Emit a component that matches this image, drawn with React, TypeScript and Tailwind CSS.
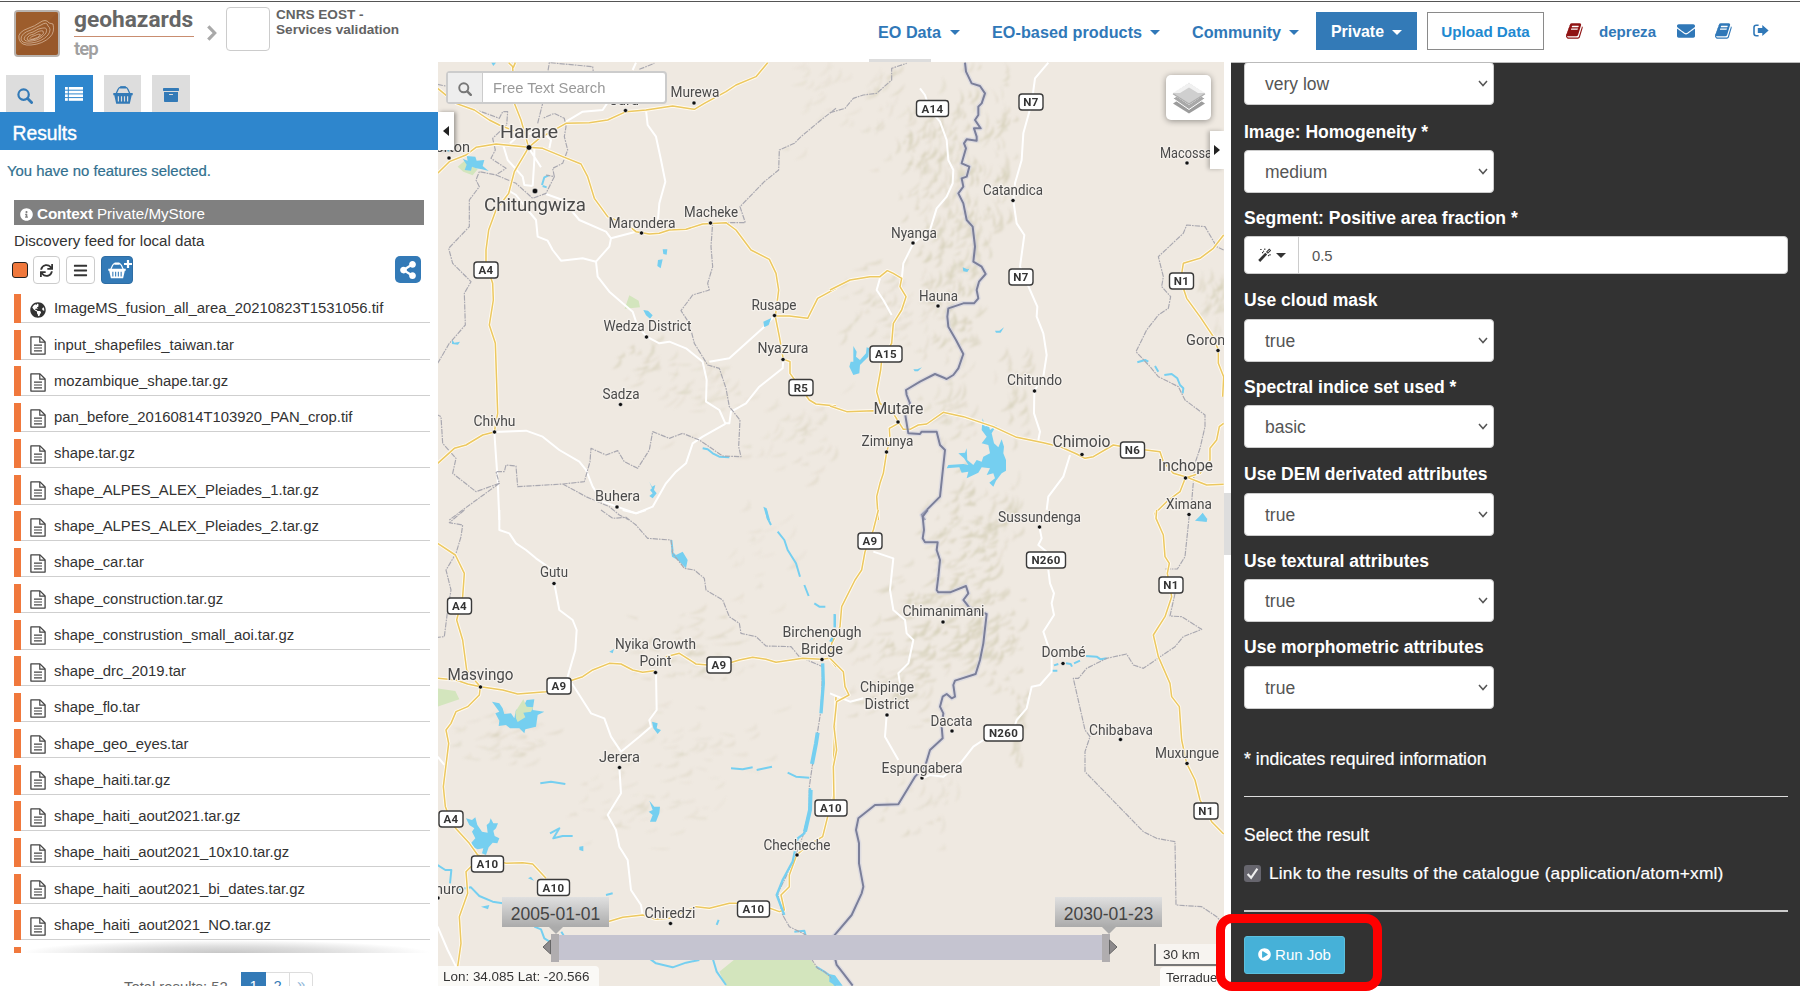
import React from "react";
import {
  FaArchive,
  FaBars,
  FaEnvelope,
  FaGlobeAmericas,
  FaInfoCircle,
  FaPlayCircle,
  FaShareAlt,
  FaSync,
} from "react-icons/fa";

const files = [
  "ImageMS_fusion_all_area_20210823T1531056.tif",
  "input_shapefiles_taiwan.tar",
  "mozambique_shape.tar.gz",
  "pan_before_20160814T103920_PAN_crop.tif",
  "shape.tar.gz",
  "shape_ALPES_ALEX_Pleiades_1.tar.gz",
  "shape_ALPES_ALEX_Pleiades_2.tar.gz",
  "shape_car.tar",
  "shape_construction.tar.gz",
  "shape_construstion_small_aoi.tar.gz",
  "shape_drc_2019.tar",
  "shape_flo.tar",
  "shape_geo_eyes.tar",
  "shape_haiti.tar.gz",
  "shape_haiti_aout2021.tar.gz",
  "shape_haiti_aout2021_10x10.tar.gz",
  "shape_haiti_aout2021_bi_dates.tar.gz",
  "shape_haiti_aout2021_NO.tar.gz",
];

/* ---------- small icons ---------- */

const SearchGlyph = ({ className }: { className: string }) => (
  <svg viewBox="0 0 16 16" className={className} fill="none" stroke="currentColor">
    <circle cx="6.6" cy="6.6" r="5.2" strokeWidth="2.2" />
    <path d="M10.6 10.6 L14.6 14.6" strokeWidth="2.8" strokeLinecap="round" />
  </svg>
);

const ListGlyph = () => (
  <svg viewBox="0 0 18 14" className="h-[14px] w-[18px]" fill="currentColor">
    {[0, 3.7, 7.4, 11.1].map((y) => (
      <React.Fragment key={y}>
        <rect x="0" y={y} width="2.8" height="2.7" />
        <rect x="3.8" y={y} width="14.2" height="2.7" />
      </React.Fragment>
    ))}
  </svg>
);

const BookGlyph = ({ className }: { className: string }) => (
  <svg viewBox="0 0 1792 1792" className={className} fill="currentColor">
    <path d="M1639 478q40 57 18 129l-275 906q-19 64-76.5 107.5t-122.5 43.5h-923q-77 0-148.5-53.5t-99.5-131.5q-24-67-2-127 0-4 3-27t4-37q1-8-3-21.5t-3-19.5q2-11 8-21t16.5-23.5 16.5-23.5q23-38 45-91.5t30-91.5q3-10 .5-30t-.5-28q3-11 17-28t17-23q21-36 42-92t25-90q1-9-2.5-32t.5-28q4-13 22-30.5t22-22.5q19-26 42.5-84.5t27.5-96.5q1-8-3-25.5t-2-26.5q2-8 9-18t18-23 17-21q8-12 16.5-30.5t15-35 16-36 19.5-32 26.5-23.5 36-11.5 47.5 5.5l-1 3q38-9 51-9h761q74 0 114 56t18 130l-274 906q-36 119-71.5 153.5t-128.5 34.5h-869q-27 0-38 15-11 16-1 43 24 70 144 70h923q29 0 56-15.5t35-41.5l300-987q7-22 5-57 38 15 59 43zm-1064 2q-4 13 2 22.5t20 9.5h608q13 0 25.5-9.5t16.5-22.5l21-64q4-13-2-22.5t-20-9.5h-608q-13 0-25.5 9.5t-16.5 22.5zm-83 256q-4 13 2 22.5t20 9.5h608q13 0 25.5-9.5t16.5-22.5l21-64q4-13-2-22.5t-20-9.5h-608q-13 0-25.5 9.5t-16.5 22.5z" />
  </svg>
);

const SignOutGlyph = () => (
  <svg viewBox="0 0 16 14" className="h-[14px] w-[16px]" fill="currentColor">
    <path d="M5.6 1.2 H3.2 Q1 1.2 1 3.4 V9.6 Q1 11.8 3.2 11.8 H5.6" fill="none" stroke="currentColor" strokeWidth="1.6" />
    <path d="M9.3 1 L15.6 6.5 L9.3 12 V9 H4.8 V4 H9.3 Z" />
  </svg>
);

const FileGlyph = () => (
  <svg viewBox="0 0 16 19" className="h-[19px] w-[16px]" fill="none" stroke="#444">
    <path d="M0.9 0.9 H10 L15.1 6 V18.1 H0.9 Z" strokeWidth="1.3" strokeLinejoin="round" />
    <path d="M9.8 1 V6.2 H15" strokeWidth="1.2" />
    <path d="M4 9.2 H12 M4 12 H12 M4 14.8 H12" strokeWidth="1.2" />
  </svg>
);

const WandGlyph = () => (
  <svg viewBox="0 0 14 14" className="h-[14px] w-[14px]" fill="none" stroke="currentColor">
    <path d="M1.2 13 L8.2 5.6" strokeWidth="2.7" />
    <path d="M8.9 4.9 L12.2 1.500" strokeWidth="2.7" />
    <path d="M9.6 4.2 L11.6 2.100" stroke="#fff" strokeWidth=".9" />
    <path d="M2.2 1.500 H3.6 M5.2 2.800 L6 3.600 M6.8 .6 V2 M4 4.600 H5.200 M12 6 V7.400 M10.200 7.200 L11 8" strokeWidth="1.100" />
  </svg>
);

const Caret = () => (
  <span className="inline-block border-x-[5px] border-t-[5px] border-x-transparent border-t-current" />
);

/* ---------- header ---------- */

const Logo = () => (
  <svg viewBox="0 0 48 49" className="h-[49px] w-[48px]">
    <rect x="1" y="1" width="46" height="47" rx="4" fill="#b9b3ae" />
    <rect x="3" y="3" width="42" height="43" rx="2" fill="#98582a" />
    <path d="M3 3 H45 L3 44 Z" fill="#a4642f" opacity=".45" />
    <g fill="none" stroke="#f0dcc8" strokeWidth=".7" opacity=".8">
      <path d="M6 30 Q4 23 16 19 Q22 17 26 14 Q33 9 36 14 L40 15 Q42 23 37 28 Q30 35 18 36 Q8 37 6 30Z" />
      <path d="M8 30 Q8 24 18 21 Q24 18 28 16 Q34 12 35 17 Q39 20 35 26 Q29 33 18 34 Q9 35 8 30Z" />
      <path d="M11 30 Q12 25 20 23 Q26 19 30 19 Q35 18 33 24 Q28 31 19 32 Q12 33 11 30Z" />
      <path d="M14 30 Q15 26 21 25 Q27 21 30 22 Q32 24 28 27 Q23 31 18 31 Q14 32 14 30Z" />
      <path d="M17 29.5 Q18 27 22 26.5 Q27 24 27.500 26 Q25 29 20 30 Q17 31 17 29.500Z" />
    </g>
  </svg>
);

const Header = () => (
  <header className="flex h-[62px] w-[1800px] border-t border-white bg-white">
    <div className="flex w-full border-t-[1.500px] border-[#555]">
      <div className="flex w-[868px] pl-[13px]">
        <div className="pt-[7px]">
          <Logo />
        </div>
        <div className="ml-[13px] w-[120px] pt-[3px] font-['Roboto'] leading-none">
          <div className="h-[32px] border-b-[1.500px] border-[#c98d70] pt-px text-[22.700px] leading-[27px] font-bold text-[#666]">
            geohazards
          </div>
          <div className="mt-[2px] text-[18.500px] leading-[20px] font-semibold tracking-[-0.900px] text-[#a0a0a0]">tep</div>
        </div>
        <svg viewBox="0 0 10 16" className="mt-[23px] ml-[13px] h-[16px] w-[10px]" fill="none" stroke="#a9a9a9" strokeWidth="3.2">
          <path d="M1.300 1.300 L7.700 8 L1.300 14.700" />
        </svg>
        <div className="mt-[5px] ml-[9px] h-[44px] w-[44px] rounded-[4px] border border-[#ccc]" />
        <div className="ml-[6px] pt-[5px] text-[13.600px] leading-[15.200px] font-bold text-[#636363]">
          CNRS EOST -<br />
          Services validation
        </div>
      </div>
      <nav className="flex flex-1 items-start pt-[10px] text-[16.200px] font-bold text-[#3078b8]">
        <div className="flex h-[50px] w-[114px] flex-col justify-between">
          <a className="flex h-[38px] items-center gap-[9px] pt-[3px] pl-[10px] leading-none whitespace-nowrap">
            EO Data <Caret />
          </a>
          <span className="ml-px h-[3px] w-[62px] bg-[#ddd]" />
        </div>
        <a className="flex h-[38px] w-[200px] items-center gap-[8px] pt-[3px] pl-[10px] leading-none whitespace-nowrap">
          <span className="tracking-[0.050px]">EO-based products</span> <Caret />
        </a>
        <a className="flex h-[38px] w-[134px] items-center gap-[8px] pt-[3px] pl-[10px] leading-none whitespace-nowrap">
          Community <Caret />
        </a>
        <a className="flex h-[38px] w-[101px] items-center gap-[8px] bg-[#337ab7] pt-[2px] pl-[15px] text-[15.900px] leading-none text-white">
          Private <Caret />
        </a>
        <a className="ml-[10px] flex h-[38px] w-[117px] items-center justify-center border-[1.500px] border-[#8a8a8a] pt-px text-[15.200px] leading-none whitespace-nowrap text-[#2189d1]">
          Upload Data
        </a>
        <div className="flex h-[38px] items-center text-[15.100px]">
          <BookGlyph className="ml-[22px] h-[18px] w-[18px] text-[#8f1313]" />
          <span className="ml-[15px] w-[58px] pt-[2px]">depreza</span>
          <FaEnvelope className="ml-[20px] h-[18px] w-[18px]" />
          <BookGlyph className="ml-[20px] h-[18px] w-[18px]" />
          <span className="ml-[20px]">
            <SignOutGlyph />
          </span>
        </div>
      </nav>
    </div>
  </header>
);

/* ---------- results panel ---------- */

const Basket = ({ className }: { className: string }) => (
  <svg viewBox="0 0 20 18" className={className} fill="none" stroke="currentColor">
    <path d="M3 8 L5 3.500 Q6 1.200 8 1.200 H12 Q14 1.200 15 3.500 L17 8" strokeWidth="1.300" />
    <path d="M8 1.400 H12" strokeWidth="2.400" strokeLinecap="round" />
    <path d="M0.300 7 H19.700 V9.200 H18.700 L16.800 17.700 H3.200 L1.300 9.200 H0.300 Z" fill="currentColor" stroke="none" />
    <path d="M5.400 10.300 V15.600 M8.500 10.300 V15.600 M11.500 10.300 V15.600 M14.600 10.300 V15.600" stroke="var(--slot)" strokeWidth="1.200" />
  </svg>
);

const ResultsPanel = () => (
  <aside className="flex w-[438px] flex-col overflow-hidden bg-white">
    <div className="flex h-[50px] shrink-0 items-end gap-[11px] pl-[6px] text-[#337ab7]">
      <div className="flex h-[37px] w-[38px] items-center justify-center bg-[#ddd] pt-[4px]">
        <SearchGlyph className="h-[16px] w-[16px]" />
      </div>
      <div className="flex h-[37px] w-[38px] items-center justify-center bg-[#2e86cd] text-white">
        <ListGlyph />
      </div>
      <div className="flex h-[37px] w-[37px] items-center justify-center bg-[#ddd] pt-[3px] [--slot:#ddd]">
        <Basket className="h-[18px] w-[20px]" />
      </div>
      <div className="flex h-[37px] w-[38px] items-center justify-center bg-[#ddd] pt-[3px]">
        <FaArchive className="h-[16px] w-[16px]" />
      </div>
    </div>
    <div className="h-[38px] shrink-0 bg-[#2e86cd] pl-[12.500px] text-[19.300px] leading-[43px] text-white [-webkit-text-stroke:0.400px]">
      Results
    </div>
    <p className="h-[50px] shrink-0 pt-[10px] pl-[7px] text-[14.900px] leading-[22px] text-[#31708f] [-webkit-text-stroke:0.200px]">
      You have no features selected.
    </p>
    <div className="mr-[14px] ml-[14px] flex h-[25px] shrink-0 items-center bg-[#808080] pt-[3px] pl-[6px] text-[15.200px] text-white">
      <FaInfoCircle className="h-[13px] w-[13px]" />
      <b className="mr-[4px] ml-[4px] text-[15.300px] tracking-[-0.150px]">Context</b>Private/MyStore
    </div>
    <p className="h-[31px] shrink-0 pt-[5px] pl-[14px] text-[15.100px] leading-[22px] text-[#333]">Discovery feed for local data</p>
    <div className="flex h-[31px] shrink-0 items-start pl-[12px] text-[#333]">
      <span className="mt-[6px] h-[16px] w-[16px] rounded-[3px] border-[1.500px] border-[#222] bg-[#f0783c]" />
      <span className="ml-[5px] flex h-[28px] w-[27px] items-center justify-center rounded-[4px] border border-[#ccc]">
        <FaSync className="h-[13px] w-[13px]" />
      </span>
      <span className="ml-[6px] flex h-[28px] w-[29px] items-center justify-center rounded-[4px] border border-[#ccc]">
        <FaBars className="h-[15px] w-[15px]" />
      </span>
      <span className="ml-[6px] flex h-[28px] w-[32px] items-start rounded-[4px] border border-[#2e6da4] bg-[#337ab7] pt-[5px] pl-[6px] text-white [--slot:#337ab7]">
        <Basket className="h-[17px] w-[18px]" />
        <svg viewBox="0 0 8 8" className="-mt-[2px] -ml-[2px] h-[8px] w-[8px] shrink-0" stroke="white" strokeWidth="2.200">
          <path d="M4 0 V8 M0 4 H8" />
        </svg>
      </span>
      <span className="ml-[262px] flex h-[27px] w-[26px] items-center justify-center rounded-[5px] bg-[#337ab7] text-white">
        <FaShareAlt className="h-[18px] w-[18px]" />
      </span>
    </div>
    <div className="h-[666px] shrink-0 overflow-hidden pl-[14px]">
      {files.map((f, i) => (
        <div key={f} className="flex h-[36.270px] w-[416px] items-end">
          <div className="h-[29.500px] w-[7px] bg-[#f0783c]" />
          <div className="flex h-[29.500px] flex-1 items-center border-b border-[#cfcfcf] pl-[9px] text-[14.850px] text-[#333]">
            <span className="flex w-[16px] justify-center pt-[3px]">
              {i === 0 ? <FaGlobeAmericas className="h-[16px] w-[16px] text-[#333]" /> : <FileGlyph />}
            </span>
            <span className="ml-[8px] pt-px whitespace-nowrap">{f}</span>
          </div>
        </div>
      ))}
      <div className="flex h-[13px]">
        <div className="mt-[7px] h-[6px] w-[7px] bg-[#f0783c]" />
        <svg viewBox="0 0 409 13" className="h-[13px] w-[409px]">
          <defs>
            <radialGradient id="listShade" cx=".5" cy=".5" r=".5">
              <stop offset="0" stopColor="#c6c6c6" />
              <stop offset=".5" stopColor="#dedede" />
              <stop offset="1" stopColor="#fff" />
            </radialGradient>
          </defs>
          <ellipse cx="204.500" cy="13" rx="204.500" ry="13" fill="url(#listShade)" />
        </svg>
      </div>
    </div>
    <div className="flex pt-[19px] pl-[124px] text-[14.800px] text-[#666]">
      <span className="w-[117px] pt-[4px] leading-[22px]">Total results: 52</span>
      <span className="h-[34px] w-[25px] bg-[#337ab7] pt-[3px] text-center leading-[22px] text-white">1</span>
      <span className="h-[34px] w-[24px] border border-l-0 border-[#ddd] pt-[3px] text-center leading-[20px] text-[#337ab7]">2</span>
      <span className="h-[34px] w-[23px] rounded-r border border-l-0 border-[#ddd] pt-px text-center leading-[20px] text-[#8fb5d8]">»</span>
    </div>
  </aside>
);

/* ---------- map ---------- */

type Sheet = {
  x: number;
  y: number;
  green?: string;
  water?: string;
  stream?: string;
  minor: string;
  admin: string;
  major: string;
  border?: string;
};

/* Each sheet is digitised at three units per screen pixel from its own corner. */
const sheets: Sheet[] = [
  {
    x: 436,
    y: 60,
    green: "M65 320L85 303 125 328 110 346 82 335Z M580 706L608 722 612 742 566 746Z",
    water:
      "M80 296L95 302 92 288 118 290 122 302 145 300 140 318 158 333 138 328 120 325 108 320 105 332 86 330 92 314Z M680 568L694 568 692 584 682 582Z M666 600L680 598 674 625 664 618Z M622 750L636 752 650 766 642 776 630 766Z M982 785L1006 774 998 795 985 802Z M48 838L55 848 72 845 66 854 48 852Z M640 1265L648 1280 658 1275 654 1290 662 1300 650 1315 640 1308 650 1300 642 1290 648 1285Z M982 1340L992 1345 1002 1380 994 1380Z M166 8H180L172 18Z",
    stream: "M318 375L325 352 338 346 M320 378L332 382 M800 1165L815 1168 830 1180 850 1190 880 1192 M10 270L50 272",
    minor:
      "M215 390L240 405 275 450 300 480 305 530 335 542 350 570 375 602 440 595 480 605 485 650 520 695 560 730 590 755 605 800 632 830 670 850 700 845 750 865 800 905 812 960 810 1025 850 1050 868 1090 880 1090 885 1055 930 1030 970 980 1040 925 1042 898 M480 605L520 560 525 535 600 515 M525 535L510 515 430 480 380 420 330 402 M630 150L635 195 660 230 675 300 688 365 670 430 665 490 M295 265L295 300 290 378 M282 270L315 322 M200 250L215 300 260 350 265 375 290 378 M222 250L250 225 320 215 345 240 340 265 M1015 768L985 800 930 850 880 895 820 905 M175 1116L180 1190 185 1260 190 1380 M175 1116L270 1112 320 1130 370 1170 430 1205 450 1230 470 1280 500 1325 543 1340 600 1360 650 1340 690 1270 720 1235 750 1210 770 1150 800 1130 868 1092 M390 185L440 155 500 150 520 120 M590 30L600 8",
    admin:
      "M5 73L60 85 M60 130L150 160 190 175 200 155 215 155 212 195 170 235 178 270 165 295 210 325 180 345 130 335 120 360 130 380 100 420 100 500 38 565 50 610 105 665 85 700 88 795 40 850 5 910 M180 345L240 370 290 415 330 400 355 350 330 345 M355 350L350 325 380 310 395 270 385 230 390 200 385 175 355 160 320 175 M305 190L320 130 340 8 470 20 475 60 M610 28L655 10 M1200 145L1155 180 1095 230 1075 250 1030 270 1028 330 985 365 912 440 928 488 830 488 825 560 830 620 815 670 820 690 770 705 735 752 760 790 775 850 815 915 850 925 870 985 880 1040 912 1080 908 1160 915 1190 860 1188 790 1140 740 1120 700 1135 650 1115 640 1170 605 1225 565 1205 545 1172 510 1185 465 1165 462 1205 445 1265 380 1272 245 1280 240 1218 210 1215 205 1235 180 1235 190 1270 120 1295 50 1240 60 1195 20 1150 15 1070 5 1065 M190 1270L80 1350 40 1380 M380 1272L450 1310 520 1340 550 1365 580 1380",
    major:
      "M5 85L60 130 115 150 160 180 190 195 240 215 M218 8L232 22 238 8 M230 20L232 60 235 130 255 180 278 262 310 235 390 190 460 188 515 180 570 155 630 150 710 138 775 148 805 130 870 95 900 75 960 50 995 8 M5 340L40 305 90 285 120 262 180 252 278 262 320 265 380 290 435 312 455 350 475 415 515 470 575 495 600 515 640 522 670 520 700 510 750 508 800 492 870 488 900 510 945 570 1000 598 1020 640 1028 690 1018 770 1030 830 1042 898 1062 905 1062 940 1080 965 1120 1020 1140 1032 1200 1038 M278 262L235 335 218 400 180 450 158 510 150 570 150 610 170 670 172 720 160 795 178 850 185 1060 175 1116 140 1125 90 1155 55 1165 5 1210 M1015 768L1060 768 1115 775 1145 715 1200 685",
  },
  {
    x: 830,
    y: 60,
    water:
      "M70 858L80 875 78 890 90 900 108 880 110 862 118 865 115 890 90 915 88 940 70 945 58 920 62 905 70 905Z M398 622L412 628 418 626 412 636 400 634Z M495 812L508 812 522 802 512 818 498 818Z M250 928L262 928 276 922 264 934 254 934Z M458 1075L465 1100 475 1090 480 1110 500 1095 485 1120 492 1150 505 1162 515 1138 522 1160 520 1180 528 1200 528 1232 515 1240 498 1262 490 1280 478 1268 495 1255 490 1240 470 1245 480 1225 455 1222 445 1238 410 1255 415 1235 395 1238 388 1222 350 1225 355 1215 400 1212 415 1215 402 1195 385 1180 405 1178 410 1165 412 1200 430 1215 440 1200 455 1205 460 1190 480 1180 475 1155 455 1150 470 1130 455 1110Z M1102 1380L1118 1358 1130 1375 1130 1380Z",
    stream: "M922 907L945 900 955 905 M975 918L985 935 M1003 945L1025 942 1042 955 1050 975 1060 985 1058 1000",
    minor:
      "M655 8L615 55 605 130 580 220 575 300 555 370 550 422 560 490 583 525 570 620 600 690 622 740 620 770 640 820 650 885 640 950 613 992 612 1060 630 1115 625 1140 M270 85L285 105 300 150 330 185 350 240 355 300 370 330 368 370 350 410 320 445 300 510 250 550 235 580 220 610 215 660 M150 655L140 690 160 720 185 765 M720 1185L700 1250 655 1310 650 1350",
    admin:
      "M0 158L45 145 70 115 100 105 140 100 185 60 185 25 230 10 M1181 570L1160 560 1125 500 1070 495 1060 520 985 590 1000 650 995 680 1022 710 1015 745 985 765 950 810 918 875 960 920 985 950 1045 980 1065 1020 1125 1065 1125 1100 1110 1165 1095 1210 1085 1325",
    major:
      "M0 690L60 660 120 650 150 650 172 632 190 640 215 655 210 680 228 710 215 750 190 790 185 850 155 900 152 930 140 995 150 1030 190 1060 205 1085 M0 1038L50 1055 130 1052 180 1055 M205 1085L220 1108 240 1108 265 1095 290 1092 340 1057 400 1070 490 1100 560 1132 640 1148 690 1160 740 1182 765 1195 790 1190 850 1155 905 1165 990 1175 1000 1205 1030 1240 1066 1250 1130 1275 1181 1273 M205 1090L178 1105 180 1140 170 1176 160 1240 150 1270 140 1310 145 1380 M1181 525L1150 565 1110 595 1060 610 1052 660 1070 715 1110 770 1150 830 1165 870 1165 910 1181 950 1178 1010 M1181 1090L1168 1100 1160 1140 1140 1165 1140 1200 1110 1240 1066 1254 1050 1295 1010 1325 975 1360 980 1380",
    border:
      "M405 8L408 35 425 70 450 78 465 100 455 130 445 140 445 165 435 180 452 205 432 205 440 230 440 242 410 238 402 250 408 265 395 310 418 320 410 350 395 355 400 380 385 400 400 430 410 480 428 500 435 560 430 605 455 620 467 642 447 665 440 690 445 715 432 730 400 730 355 745 352 770 355 800 378 840 400 882 385 925 370 945 350 957 315 942 270 965 228 990 230 1005 240 1030 225 1060 235 1120 270 1122 275 1115 320 1115 330 1155 345 1170 330 1310 275 1365 285 1380",
  },
  {
    x: 436,
    y: 510,
    green: "M5 535L58 543 70 568 5 590Z M850 1385L900 1345 1120 1345 1150 1380 1200 1400V1428H870Z",
    water:
      "M168 575L190 580 200 595 205 612 225 610 235 625 240 600 262 590 272 570 295 568 290 600 325 605 305 615 300 650 268 658 265 670 250 655 222 655 210 645 188 648 190 632 178 610 190 605Z M90 925L108 930 118 922 124 945 138 965 155 968 152 945 160 938 164 925 172 940 186 940 180 955 172 962 176 978 190 985 184 1000 170 998 158 1012 150 1035 138 1030 142 1015 125 1018 108 1010 106 998 118 985 108 965 115 955 100 945Z M640 872L655 890 672 890 670 910 660 935 642 935 650 915 638 905 650 900Z M648 635L665 640 662 655 675 660 665 672 652 655Z M705 120L720 135 740 125 755 150 750 175 725 150 708 140Z M430 1010L442 1008 442 1024 430 1020Z M276 1105L285 1100 294 1112Z M520 425L534 417 530 430Z M135 1190L160 1185 156 1198Z M1180 1395L1200 1400V1428L1180 1415Z",
    stream:
      "M990 0L995 25 1005 45 M1025 65L1045 90 1055 120 1080 160 1092 200 M1105 225L1118 258 M1135 280L1150 290 1168 290 M706 90L710 125 M313 820L345 815 388 822 M342 970L370 955 352 985 380 978 410 978 M885 775L920 778 950 772 M962 780L1008 770 M1055 788L1080 800 1120 803 M5 1065L28 1080 46 1080 42 1120 M60 1140L105 1132 130 1158 170 1175 200 1180 M510 1155L530 1150 M295 1250L315 1258 325 1285 365 1310 M376 1265L388 1285 M842 1245L848 1230 M640 1345L660 1360 710 1372 750 1358 790 1350 M830 1345L842 1385 870 1425 M1075 1265L1105 1262 1110 1280 M1140 1370L1165 1385 1200 1410",
    minor:
      "M190 0L190 60 220 70 240 100 270 120 300 145 350 180 M355 220L370 300 410 330 422 360 418 420 395 500 430 555 465 610 505 625 525 680 555 725 610 680 645 650 640 630 662 600 660 487 M550 772L555 850 515 915 540 960 550 1010 575 1050 585 1140 615 1185 620 1215 M5 740L25 765 M5 1250L35 1320 60 1370 M560 0L600 10 630 0",
    admin:
      "M85 0L40 38 80 45 75 80 60 130 30 180 45 240 35 300 25 380 5 382 M495 0L530 25 570 22 600 45 635 85 705 90 710 130 745 175 775 180 805 205 810 240 860 270 880 320 910 340 915 370 960 380 990 408 1065 410 1090 440 1160 470 1155 600 1130 760 1120 830 1120 900 1100 980 1070 1060 1025 1150 1040 1215 1060 1250 1110 1275 M1125 1345L1145 1375 1165 1385 1200 1415",
    major:
      "M5 100L58 135 85 190 80 260 62 330 80 390 92 480 120 515 133 530 130 555 95 590 60 605 45 640 30 660 38 700 30 765 22 830 28 890 50 945 100 1000 125 1035 210 1060 260 1058 290 1062 330 1105 M110 1065L90 1085 95 1150 70 1220 75 1300 65 1370 M5 505L60 510 95 522 133 530 200 540 245 552 330 545 410 510 440 500 470 480 520 460 555 462 590 480 620 487 655 482 M690 440L730 430 780 462 850 468 910 450 950 442 990 448 1020 457 1100 445 1157 448 1180 445 1200 470 M500 1240L560 1222 620 1215 660 1228 700 1225 780 1190 820 1195 880 1180 960 1180 1030 1205 1045 1200 1035 1155 1060 1130 1060 1095 1082 1035 1110 1010 1160 980 1175 920 1195 850 1192 770 1200 560",
  },
  {
    x: 830,
    y: 510,
    water: "M1095 32L1118 10 1120 22 1132 26 1130 36Z M0 1393L15 1396 38 1427H12Z",
    stream: "M15 315V352 M0 395L12 378 M768 438L800 440 812 448 830 445 M668 482H682 M672 466L685 462 M708 460L722 462 726 470 M732 460L750 452",
    minor:
      "M628 50L635 85 625 105 650 125 M655 180L660 220 672 250 665 280 672 315 640 365 665 440 665 485 630 525 605 530 590 595 560 630 555 645 M460 690L430 710 395 755 340 800 300 795 276 805 M130 125L190 145 180 240 190 300 225 330 230 370 250 390 235 460 205 490 210 520 M0 550L60 575 100 565 M170 615L165 680 205 750",
    admin:
      "M1078 15L1065 140 1042 177 1005 177 M1035 250L1020 318 1055 320 1115 358 1060 380 1035 410 940 475 910 465 890 432 830 445 770 475 745 505 730 505 765 660 780 680 765 725 765 785 940 965 980 985 1035 995 1038 1185 1115 1190 1160 1220 1181 1245",
    major:
      "M145 0L130 60 105 125 95 180 75 210 35 290 30 350 5 400 0 445 40 485 45 530 57 555 20 575 12 650 20 720 10 770 12 870 M980 0L978 25 1000 75 1005 140 1018 160 1012 190 1025 260 1005 320 970 375 985 440 1020 520 1025 560 1048 590 1055 690 1070 760 1095 810 1110 870 1145 935 1181 972",
    border:
      "M293 0L278 20 282 60 278 85 285 97 323 97 320 120 330 150 325 200 320 240 325 247 360 247 408 228 415 250 400 270 420 295 470 312 460 400 450 450 437 492 375 512 370 525 375 560 365 565 350 552 338 560 330 590 340 610 335 650 338 685 300 720 285 770 255 800 205 883 135 885 85 925 78 960 87 1000 87 1060 100 1130 95 1150 65 1215 8 1282 M15 1345L20 1365 40 1390 68 1427",
  },
];

/* Relief areas: centre, spread, amount, direction in degrees and strength. */
const relief = [
  [925, 165, 26, 70, 90, 70, 0.5],
  [965, 190, 20, 100, 90, 80, 0.5],
  [1000, 150, 12, 80, 40, 85, 0.55],
  [945, 270, 30, 50, 70, 60, 0.5],
  [880, 310, 40, 40, 50, 45, 0.35],
  [950, 340, 25, 40, 45, 60, 0.5],
  [945, 420, 25, 30, 30, 50, 0.45],
  [1010, 400, 16, 45, 30, 70, 0.45],
  [690, 400, 45, 50, 40, 30, 0.3],
  [800, 440, 40, 50, 36, 40, 0.3],
  [960, 540, 36, 60, 90, 35, 0.55],
  [930, 620, 50, 50, 100, 30, 0.55],
  [980, 640, 40, 45, 80, 45, 0.5],
  [890, 690, 40, 40, 60, 35, 0.4],
  [1015, 730, 9, 40, 26, 88, 0.5],
  [1000, 520, 18, 40, 30, 60, 0.4],
  [690, 660, 60, 40, 60, 15, 0.35],
  [680, 740, 90, 30, 40, 20, 0.25],
  [500, 740, 50, 30, 45, 20, 0.3],
  [640, 810, 70, 40, 45, 20, 0.25],
  [920, 800, 35, 40, 30, 60, 0.3],
  [1212, 300, 14, 30, 34, 80, 0.45],
  [640, 365, 28, 22, 22, 50, 0.45],
  [820, 110, 50, 60, 30, 45, 0.22],
  [760, 560, 40, 50, 20, 40, 0.22],
  [880, 100, 20, 30, 20, 60, 0.35],
];

const hash = (n: number) => {
  const v = Math.sin(n * 127.1 + 11.7) * 43758.5453;
  return v - Math.floor(v);
};

const reliefMarks = relief.flatMap(([cx, cy, sx, sy, count, dir, strength], r) =>
  Array.from({ length: count }, (_, i) => {
    const k = r * 1000 + i * 7;
    const x = cx + (hash(k) + hash(k + 1) - 1) * sx * 1.3;
    const y = cy + (hash(k + 2) + hash(k + 3) - 1) * sy * 1.3;
    const len = 6 + hash(k + 4) * 15;
    const a = ((-dir + (hash(k + 5) - 0.5) * 60) * Math.PI) / 180;
    const dx = Math.cos(a) * len;
    const dy = Math.sin(a) * len;
    const w = 2 + hash(k + 6) * 4;
    return {
      d: `M${x.toFixed(1)} ${y.toFixed(1)}q${(dx / 2 + w).toFixed(1)} ${(dy / 2).toFixed(1)} ${dx.toFixed(1)} ${dy.toFixed(1)}q${(-dx / 2 + w * 2).toFixed(1)} ${(-dy / 2 + w).toFixed(1)} ${(-dx).toFixed(1)} ${(-dy).toFixed(1)}z`,
      o: strength * (0.6 + hash(k + 8) * 0.7),
    };
  }),
);

/* Place names: text, middle x, baseline y, drawn width, size. */
const places: [string, number, number, number, number][] = [
  ["Murewa", 695, 97, 49, 14.5],
  ["Harare", 529, 137.500, 58, 19],
  ["Chitungwiza", 535, 211, 102, 19],
  ["Marondera", 642, 227.500, 67, 14.5],
  ["Macheke", 711, 217, 54, 14.5],
  ["Wedza District", 647.500, 331, 88, 14.5],
  ["Rusape", 774, 310, 45, 14.5],
  ["Nyazura", 783, 353, 51, 14.5],
  ["Sadza", 621, 398.500, 37, 14.5],
  ["Chivhu", 494.500, 426, 42, 14.5],
  ["Buhera", 617.500, 501, 45, 14.5],
  ["Catandica", 1013, 194.500, 60, 14.5],
  ["Nyanga", 914, 238, 46, 14.5],
  ["Hauna", 938.500, 300.500, 39, 14.5],
  ["Macossa", 1186, 157.500, 52, 14.5],
  ["Chitundo", 1034.500, 384.500, 55, 14.5],
  ["Mutare", 898.500, 414, 50, 16],
  ["Zimunya", 887.500, 446, 52, 14.5],
  ["Chimoio", 1081.500, 447, 58, 16],
  ["Inchope", 1185.500, 471, 55, 16],
  ["Ximana", 1189, 508.500, 46, 14.5],
  ["Sussundenga", 1039.500, 522, 83, 14.5],
  ["Gutu", 554, 577, 28, 14.5],
  ["Nyika Growth", 655.500, 649, 81, 14.5],
  ["Point", 655.500, 666, 32, 14.5],
  ["Birchenough", 822, 637, 79, 14.5],
  ["Bridge", 822, 654, 42, 14.5],
  ["Masvingo", 480.500, 679.500, 66, 16],
  ["Jerera", 619.500, 762, 41, 14.5],
  ["Checheche", 797, 849.500, 67, 14.5],
  ["Chiredzi", 670, 918, 51, 14.5],
  ["Chimanimani", 943.500, 616, 82, 14.5],
  ["Chipinge", 887, 692, 54, 14.5],
  ["District", 887, 709, 45, 14.5],
  ["Dacata", 951.500, 725.500, 42, 14.5],
  ["Espungabera", 922, 772.500, 81, 14.5],
  ["Dombé", 1063.500, 657, 44, 14.5],
  ["Chibabava", 1121, 734.500, 64, 14.5],
  ["Muxungue", 1187, 758, 64, 14.5],
];

const dots = [
  [694, 103], [625.5, 110.5], [529, 147.5], [535, 191], [449, 158], [641.5, 233], [710.5, 223],
  [646.5, 337], [774.5, 315.5], [783, 359.5], [620.5, 404.5], [494.5, 432], [617, 507], [1013, 200.5],
  [913, 243], [938, 306], [1187, 163], [1218, 350.5], [1034.5, 391], [898, 422], [886.5, 452],
  [1082, 454.5], [1185.5, 478], [1189, 514.5], [1039.5, 527], [554, 583.5], [655.5, 672.5], [822, 659.5],
  [480.5, 687], [619.5, 767.5], [797, 855], [670.5, 923.5], [943, 622], [887, 715], [952, 731],
  [922, 778], [1063, 663.5], [1120.5, 739.5], [1187, 763.5], [438, 898],
];

const shields: [string, number, number, number][] = [
  ["A4", 486, 270, 24],
  ["R5", 801, 387.500, 24],
  ["A14", 932.500, 108.500, 32],
  ["N7", 1031, 102, 24],
  ["N7", 1021, 277, 24],
  ["A15", 886, 354, 32],
  ["N1", 1181.500, 281, 24],
  ["N6", 1132.500, 450, 24],
  ["A4", 459.500, 606, 24],
  ["A9", 870, 541, 24],
  ["N260", 1046, 560, 39],
  ["N1", 1171, 585, 24],
  ["A9", 719, 665, 24],
  ["A9", 559, 686, 24],
  ["N260", 1003.500, 733, 39],
  ["A4", 451, 819, 24],
  ["A10", 831, 808, 32],
  ["N1", 1206, 811, 24],
  ["A10", 487.500, 864, 32],
  ["A10", 553.500, 887.500, 32],
  ["A10", 753.500, 909, 32],
];

const MapCanvas = () => (
  <svg viewBox="438 62 786 924" className="block h-[924px] w-[786px] bg-[#efe9e1] font-['Roboto']">
    <defs>
      <filter id="soft" x="-5%" y="-5%" width="110%" height="110%">
        <feGaussianBlur stdDeviation="1" />
      </filter>
    </defs>
    <g fill="#d3ceb6" filter="url(#soft)">
      {reliefMarks.map((m, i) => (
        <path key={i} d={m.d} opacity={m.o} />
      ))}
    </g>
    {sheets.map((s) => (
      <g key={`${s.x}-${s.y}`} transform={`translate(${s.x} ${s.y}) scale(.33333)`} fill="none" strokeLinejoin="round">
        <path d={s.green} fill="#d3e5bd" />
        <path d={s.minor} stroke="#fff" strokeWidth="6" />
        <path d={s.water} fill="#75cff0" />
        <path d={s.stream} stroke="#75cff0" strokeWidth="6" />
        <path d={s.admin} stroke="#a9a8b0" strokeWidth="3.500" strokeDasharray="16 3 5 3" />
        <path d={s.major} stroke="#fffaf0" strokeWidth="10" />
        <path d={s.major} stroke="#ecc860" strokeWidth="4.500" />
        {s.border && <path d={s.border} stroke="#c9cbe0" strokeWidth="14" opacity=".45" />}
        {s.border && <path d={s.border} stroke="#7b7f9a" strokeWidth="6" />}
      </g>
    ))}
    <g transform="translate(436 510) scale(.33333)" fill="none">
      <path d="M240 625L238 605 262 568 272 590 292 592 285 605 262 608 268 622 245 636Z" fill="#d3e5bd" />
      <path d="M1160 460L1162 520 1155 610" stroke="#75cff0" strokeWidth="10" />
      <path d="M1145 668L1140 700 1128 762" stroke="#75cff0" strokeWidth="12" />
      <path d="M1122 835L1122 900 1105 970 1085 985 1070 1055 1040 1110 1022 1155 1045 1215" stroke="#75cff0" strokeWidth="7" />
      <path d="M1124 840L1122 900 1107 965" stroke="#75cff0" strokeWidth="12" />
      <path d="M1196 312V352 M1185 395L1190 380" stroke="#75cff0" strokeWidth="7" />
    </g>
    {dots.map(([x, y]) => (
      <circle key={`${x}-${y}`} cx={x} cy={y} r={x < 540 && y > 140 && y < 195 && x > 500 ? 2.8 : 2.1} fill="#111" stroke="#fff" strokeOpacity=".7" strokeWidth=".8" />
    ))}
    {shields.map(([t, x, y, w]) => (
      <g key={`${t}-${x}-${y}`}>
        <rect x={x - w / 2} y={y - 8} width={w} height="16" rx="3" fill="#fff" stroke="#3a3a3a" strokeWidth="1.400" />
        <text x={x} y={y + 4.2} textAnchor="middle" fontSize="11.500" fontWeight="700" fill="#333" letterSpacing=".3">
          {t}
        </text>
      </g>
    ))}
    <g fill="#4a4a4a" stroke="#f5f1ec" strokeWidth="2.500" strokeLinejoin="round" style={{ paintOrder: "stroke" }} textAnchor="middle">
      {places.map(([t, x, y, w, size]) => (
        <text key={t} x={x} y={y} fontSize={size} textLength={w} lengthAdjust="spacingAndGlyphs">
          {t}
        </text>
      ))}
      <text x="470" y="152" fontSize="14.500" textAnchor="end">
        Norton
      </text>
      <text x="639" y="105" fontSize="14.500" textAnchor="end">
        Juru
      </text>
      <text x="1186" y="344.500" fontSize="14.500" textAnchor="start">
        Gorongosa
      </text>
      <text x="464" y="893.500" fontSize="14.500" textAnchor="end">
        Mbhuro
      </text>
    </g>
  </svg>
);

const DateFlag = ({ children }: { children: string }) => (
  <div className="flex flex-col items-center">
    <div className="flex h-[30px] w-[107px] items-center justify-center bg-gradient-to-b from-[#e0e0e0] to-[#ababab] pt-[5px] text-[17.500px] text-[#444]">
      {children}
    </div>
    <span className="border-x-[7px] border-t-[7px] border-x-transparent border-t-[#ababab]" />
  </div>
);

const MapPanel = () => (
  <main className="relative w-[786px] overflow-hidden">
    <MapCanvas />
    <div className="absolute top-[9px] left-[8px] flex h-[33px] w-[221px] rounded-[4px] border-2 border-[#ccc] bg-white text-[14.800px] text-[#999]">
      <span className="flex w-[35px] items-center justify-center border-r border-[#ccc] bg-[#eee] pt-[3px] text-[#777]">
        <SearchGlyph className="h-[14px] w-[14px]" />
      </span>
      <span className="pl-[10px] leading-[31px]">Free Text Search</span>
    </div>
    <div className="absolute top-[50px] left-0 flex h-[38px] w-[16px] items-center justify-center bg-white shadow-[2px_0_4px_rgba(0,0,0,0.350)]">
      <span className="border-y-[5px] border-r-[6px] border-y-transparent border-r-[#222]" />
    </div>
    <div className="absolute top-[69px] right-0 flex h-[38px] w-[14px] items-center justify-center bg-white shadow-[-2px_0_4px_rgba(0,0,0,0.250)]">
      <span className="border-y-[5px] border-l-[6px] border-y-transparent border-l-[#222]" />
    </div>
    <div className="absolute top-[13px] right-[13px] flex h-[45px] w-[45px] items-center justify-center rounded-[5px] bg-white shadow-[0_1px_6px_rgba(0,0,0,0.400)]">
      <svg viewBox="0 0 34 32" className="h-[32px] w-[34px]">
        <path d="M17 11 L33 21.500 L17 31.500 L1 21.500 Z" fill="#9c9c9c" />
        <path d="M17 6 L33 16.500 L17 27.500 L1 16.500 Z" fill="#a8a8a8" stroke="#fff" strokeWidth="1" />
        <path d="M17 .5 L33.500 11.500 L17 22.500 L.5 11.500 Z" fill="#cfcfcf" stroke="#fff" strokeWidth="1" />
        <path d="M17 1 L33 11 H26 L17 5.500 L8 11 H1 Z" fill="#f1f1f1" />
        <path d="M1 11.800 L17 22 L33 11.800" fill="none" stroke="#ababab" strokeWidth="1.200" />
      </svg>
    </div>

    <div className="absolute top-[873px] left-[113px] h-[25px] w-[558px] bg-[#c5c4d0]" />
    <span className="absolute top-[872px] left-[113px] h-[28px] w-[8px] bg-[#b0adaf]" />
    <span className="absolute top-[872px] left-[664px] h-[28px] w-[8px] bg-[#b0adaf]" />
    <svg viewBox="0 0 9 16" className="absolute top-[877px] left-[104px] h-[16px] w-[9px]">
      <path d="M8.500 1 V15 L1 8 Z" fill="#8d8a8c" stroke="#666" strokeWidth="1" />
    </svg>
    <svg viewBox="0 0 9 16" className="absolute top-[877px] left-[671px] h-[16px] w-[9px]">
      <path d="M.5 1 V15 L8 8 Z" fill="#8d8a8c" stroke="#666" strokeWidth="1" />
    </svg>
    <div className="absolute top-[835px] left-[64px]">
      <DateFlag>2005-01-01</DateFlag>
    </div>
    <div className="absolute top-[835px] left-[617px]">
      <DateFlag>2030-01-23</DateFlag>
    </div>

    <div className="absolute bottom-0 left-0 h-[20px] w-[161px] rounded-tr-[4px] bg-white/70 pl-[5px] text-[13.450px] leading-[22px] whitespace-nowrap text-[#333]">
      Lon: 34.085 Lat: -20.566
    </div>
    <div className="absolute right-0 bottom-[20px] h-[22px] w-[70px] border-b-2 border-l-2 border-[#777] bg-white/50 pl-[7px] text-[13.500px] leading-[21px] text-[#333]">
      30 km
    </div>
    <div className="absolute right-0 bottom-0 h-[19px] w-[64px] rounded-tl-[4px] bg-white/80 pl-[6px] text-[13px] leading-[21px] text-[#333]">
      Terradue
    </div>
  </main>
);

/* ---------- job form ---------- */

const FieldLabel = ({ children }: { children: string }) => (
  <div className="pt-[15.500px] text-[17.550px] leading-[21px] font-bold whitespace-nowrap text-white">{children}</div>
);

const SelectBox = ({ value }: { value: string }) => (
  <div className="flex h-[43px] w-[250px] shrink-0 items-center justify-between rounded-[4px] border border-[#ccc] bg-white pr-[5px] pl-[20px] text-[17.500px] text-[#555]">
    <span className="pt-[2px]">{value}</span>
    <svg viewBox="0 0 10 7" className="h-[7px] w-[10px]" fill="none" stroke="#555" strokeWidth="1.500">
      <path d="M1 1 L5 5.500 L9 1" />
    </svg>
  </div>
);

const JobForm = () => (
  <section className="flex w-[569px] flex-col overflow-hidden border-t border-[#bbb] bg-[#323232] pr-[12px] pl-[13px] text-white">
    <div className="-mt-px shrink-0">
      <SelectBox value="very low" />
    </div>
    <div className="h-[45px] shrink-0 pt-px">
      <FieldLabel>Image: Homogeneity *</FieldLabel>
    </div>
    <SelectBox value="medium" />
    <div className="-mt-px h-[44px] shrink-0">
      <FieldLabel>Segment: Positive area fraction *</FieldLabel>
    </div>
    <div className="flex h-[38px] w-[544px] shrink-0 overflow-hidden rounded-[4px] border border-[#ccc] bg-white text-[14.800px] text-[#555]">
      <div className="flex w-[54px] items-center justify-center gap-[4px] border-r border-[#ccc] text-[#333]">
        <WandGlyph />
        <Caret />
      </div>
      <div className="flex items-center pt-[3px] pl-[13px]">0.5</div>
    </div>
    <div className="h-[44.500px] shrink-0">
      <FieldLabel>Use cloud mask</FieldLabel>
    </div>
    <SelectBox value="true" />
    <div className="h-[43.500px] shrink-0">
      <FieldLabel>Spectral indice set used *</FieldLabel>
    </div>
    <SelectBox value="basic" />
    <div className="h-[44.500px] shrink-0">
      <FieldLabel>Use DEM derivated attributes</FieldLabel>
    </div>
    <SelectBox value="true" />
    <div className="h-[43px] shrink-0">
      <FieldLabel>Use textural attributes</FieldLabel>
    </div>
    <SelectBox value="true" />
    <div className="h-[44px] shrink-0">
      <FieldLabel>Use morphometric attributes</FieldLabel>
    </div>
    <SelectBox value="true" />
    <p className="mt-[40px] shrink-0 text-[17.600px] leading-[21px] [-webkit-text-stroke:0.200px]">* indicates required information</p>
    <div className="mt-[26px] h-[1.500px] w-[544px] shrink-0 bg-[#ddd]" />
    <p className="mt-[28px] shrink-0 text-[17.450px] leading-[21px] [-webkit-text-stroke:0.200px]">Select the result</p>
    <div className="mt-[17px] flex shrink-0 items-center text-[17.350px] leading-[21px] tracking-[0.180px] whitespace-nowrap [-webkit-text-stroke:0.200px]">
      <span className="mr-[8px] flex h-[17px] w-[17px] items-center justify-center rounded-[3px] bg-[#66656d]">
        <svg viewBox="0 0 12 12" className="h-[13px] w-[13px]" fill="none" stroke="#eee" strokeWidth="2">
          <path d="M1.500 6.500 L4.700 10 L10.500 1.500" />
        </svg>
      </span>
      Link to the results of the catalogue (application/atom+xml)
    </div>
    <div className="mt-[26px] h-[1.500px] w-[544px] shrink-0 bg-[#ccc]" />
    <div className="mt-[24px] flex h-[38px] w-[101px] shrink-0 items-center justify-center gap-[4px] rounded-[3px] border border-[#5bc0de] bg-[#46b1d8] text-[15px] leading-none text-white">
      <FaPlayCircle className="h-[13px] w-[13px]" />
      Run Job
    </div>
  </section>
);

export default function App() {
  return (
    <div className="relative h-[991px] w-[1802px] overflow-hidden bg-white font-['Liberation_Sans',Arial,sans-serif]">
      <Header />
      <div className="flex h-[924px] w-[1800px]">
        <ResultsPanel />
        <MapPanel />
        <div className="w-[7px] pt-[431px]">
          <div className="h-[62px] bg-[#ddd]" />
        </div>
        <JobForm />
      </div>
      <div className="absolute top-[914px] left-[1216px] h-[77px] w-[166px] rounded-[16px] border-[9px] border-[#fe0000]" />
    </div>
  );
}
